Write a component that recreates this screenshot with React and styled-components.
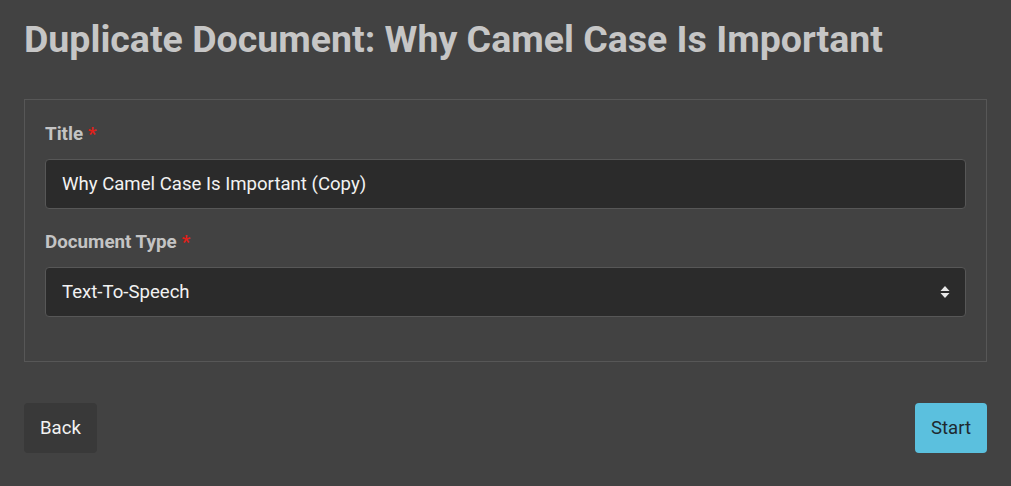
import React from "react";
import styled, { createGlobalStyle } from "styled-components";

const Global = createGlobalStyle`
  html, body { margin: 0; padding: 0; background: #424242; }
  body { font-family: Roboto, "Noto Sans", sans-serif; }
  * { box-sizing: border-box; }
`;

const Page = styled.div`
  padding: 16px 24px 0 24px;
  width: 1011px;
`;

const Heading = styled.h1`
  margin: 0 0 37px 0;
  font-size: 37.5px;
  line-height: 46px;
  font-weight: 700;
  color: #c6c6c6;
`;

const Card = styled.div`
  border: 1px solid #575757;
  padding: 21px 20px 44px 20px;
  display: flex;
  flex-direction: column;
  gap: 20px;
`;

const Field = styled.div`
  display: flex;
  flex-direction: column;
  gap: 12px;
`;

const Label = styled.label`
  font-size: 18.8px;
  font-weight: 700;
  line-height: 26px;
  color: #c4c4c4;
`;

const Req = styled.span`
  color: #e0201a;
  margin-left: 5px;
`;

const Input = styled.input`
  height: 50px;
  width: 100%;
  background: #2b2b2b;
  border: 1px solid #575757;
  border-radius: 4px;
  padding: 0 16px;
  color: #f2f2f2;
  font-family: Roboto, sans-serif;
  font-size: 18.6px;
  outline: none;
`;

const SelectWrap = styled.div`
  position: relative;
`;

const Select = styled.select`
  height: 50px;
  width: 100%;
  appearance: none;
  background: #2b2b2b;
  border: 1px solid #575757;
  border-radius: 4px;
  padding: 0 16px;
  color: #f2f2f2;
  font-family: Roboto, sans-serif;
  font-size: 18.6px;
  outline: none;
`;

const Arrows = styled.svg`
  position: absolute;
  right: 16px;
  top: 50%;
  transform: translateY(-50%);
  pointer-events: none;
`;

const Footer = styled.div`
  display: flex;
  justify-content: space-between;
  margin-top: 41px;
`;

const Button = styled.button`
  height: 50px;
  padding: 0 16px;
  border: none;
  border-radius: 4px;
  font-family: Roboto, sans-serif;
  font-size: 18.6px;
  background: ${(p) => (p.$primary ? "#5bc0de" : "#393939")};
  color: ${(p) => (p.$primary ? "#1e2a30" : "#f2f2f2")};
`;

export default function App() {
  return (
    <>
      <Global />
      <Page>
        <Heading>Duplicate Document: Why Camel Case Is Important</Heading>
        <Card>
          <Field>
            <Label>
              Title<Req>*</Req>
            </Label>
            <Input defaultValue="Why Camel Case Is Important (Copy)" />
          </Field>
          <Field>
            <Label>
              Document Type<Req>*</Req>
            </Label>
            <SelectWrap>
              <Select defaultValue="tts">
                <option value="tts">Text-To-Speech</option>
              </Select>
              <Arrows width="10" height="14" viewBox="0 0 10 14">
                <path d="M5 1 L9.5 6 H0.5 Z" fill="#e8e8e8" />
                <path d="M5 13 L9.5 8 H0.5 Z" fill="#e8e8e8" />
              </Arrows>
            </SelectWrap>
          </Field>
        </Card>
        <Footer>
          <Button>Back</Button>
          <Button $primary>Start</Button>
        </Footer>
      </Page>
    </>
  );
}
